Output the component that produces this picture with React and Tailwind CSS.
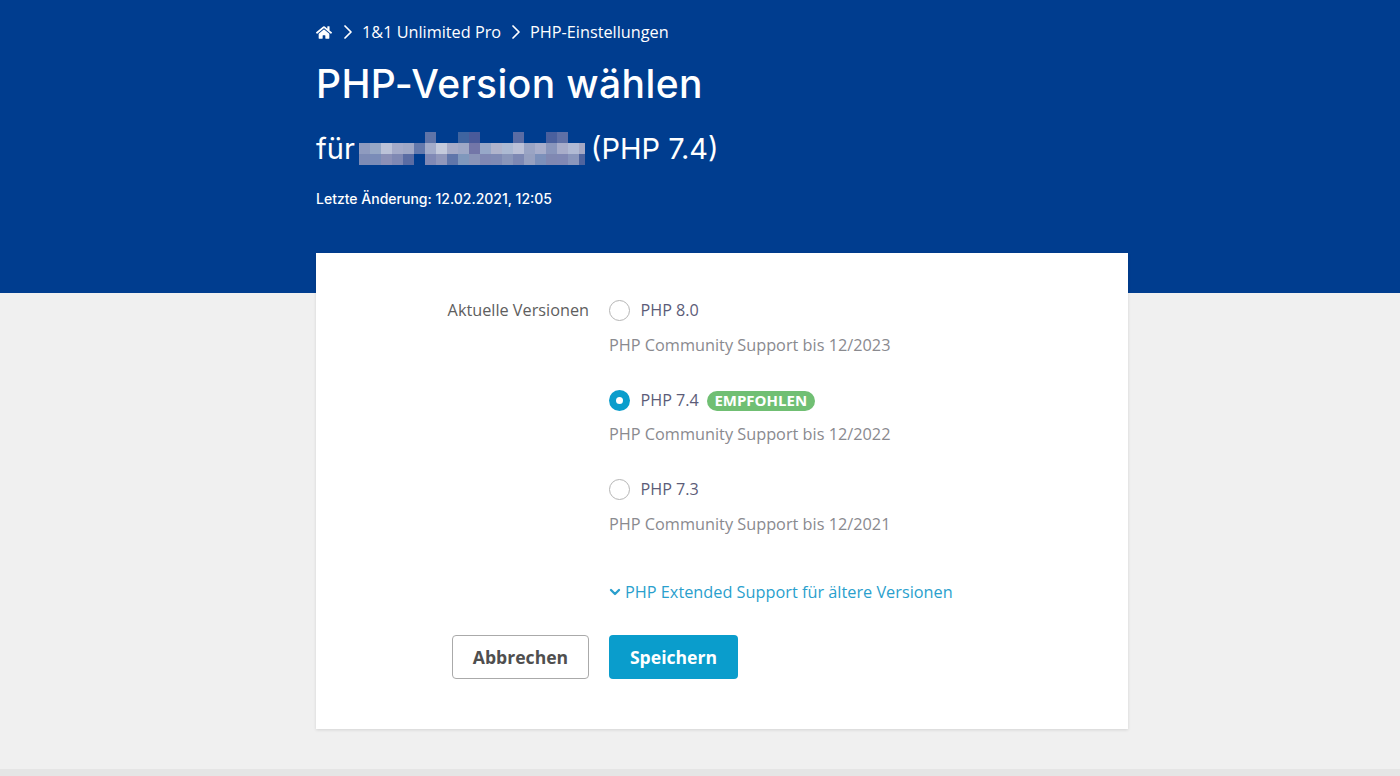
import React from 'react';
import { ChevronDown, ChevronRight } from 'lucide-react';
import { FaHome } from 'react-icons/fa';

// blurred domain name, 11px mosaic, last column is cut off
const mosaic = [
  ['', '', '', '', '', '', '#5f74a8', '', '', '#3f64a0', '#4a5a9a', '', '', '', '#5a6ca4', '', '', '#4a609e', '#5f70a6', '', ''],
  ['#8f9bbf', '#97a8c6', '#bcc2d8', '#a5abc9', '#a0a8c6', '#6479ac', '#a3acca', '#c4cadc', '#a7acc8', '#9fa8c6', '#7376a8', '#97a8c8', '#b0b4cc', '#adbad3', '#bcc1d7', '#9aa4c4', '#a8aecb', '#8a96bc', '#a8adca', '#b1bad4', '#a5a8c4'],
  ['#7d8bb5', '#7a8cb8', '#8b90b7', '#7f88b3', '#5a6ca3', '', '#8089b5', '#9097bb', '#6076aa', '#8098bc', '#8a94b8', '#8088b3', '#7f8ab4', '#8a96ba', '#7d88b3', '#96a0c0', '#7c90ba', '#8088b2', '#8088b4', '#8a96bc', '#4f649e'],
];

function Radio({ checked }) {
  if (checked) {
    return (
      <span className="w-[21px] h-[21px] rounded-full bg-[#0a9dcc] flex items-center justify-center shrink-0">
        <span className="w-[7px] h-[7px] rounded-full bg-white" />
      </span>
    );
  }
  return <span className="w-[21px] h-[21px] rounded-full border border-[#b5b5b5] bg-white shrink-0" />;
}

function VersionOption({ label, support, checked, badge, rowClass, supportClass }) {
  return (
    <div className={rowClass}>
      <div className="flex items-center h-[21px]">
        <Radio checked={checked} />
        <span className="ml-[10.5px] pb-[1px] text-[16.2px] text-[#5c5c78]">{label}</span>
        {badge && (
          <span className="ml-[8px] h-[20px] pb-[1px] px-[7.5px] rounded-full bg-[#70bf73] text-white text-[15px] font-bold flex items-center">
            {badge}
          </span>
        )}
      </div>
      <p className={`${supportClass} text-[16.3px] leading-[22px] text-[#8a8a8f]`}>{support}</p>
    </div>
  );
}

export default function App() {
  return (
    <div className="h-[776px] bg-[#f0f0f0] flex flex-col overflow-hidden font-['Open_Sans',sans-serif]">
      <div className="h-[293px] bg-[#003d8f] text-white shrink-0">
        <div className="w-[812px] ml-[316px] pt-[21px]">
          <nav className="flex items-center h-[22px] text-[16.25px]">
            <FaHome className="w-[16px] h-[17px]" />
            <ChevronRight className="w-[24px] h-[24px] ml-[4px]" strokeWidth={1.75} />
            <span className="ml-[2px]">1&amp;1 Unlimited Pro</span>
            <ChevronRight className="w-[24px] h-[24px] ml-[3px]" strokeWidth={1.75} />
            <span className="ml-[2px]">PHP-Einstellungen</span>
          </nav>
          <h1 className="mt-[15px] text-[39px] leading-[52px] font-[450] tracking-[0.4px] font-['Inter',sans-serif]">
            PHP-Version wählen
          </h1>
          <div className="mt-[22px] flex items-center h-[33px] text-[29px] font-['Inter',sans-serif]">
            <span>für</span>
            <svg width="226" height="33" viewBox="0 0 226 33" className="ml-[4px]">
              {mosaic.map((row, r) =>
                row.map((c, i) => c && <rect key={`${r}-${i}`} x={i * 11} y={r * 11} width="11" height="11" fill={c} />)
              )}
            </svg>
            <span className="ml-[6px]">(PHP 7.4)</span>
          </div>
          <p className="mt-[24px] text-[14px] leading-[20px] font-medium font-['Inter',sans-serif]">
            Letzte Änderung: 12.02.2021, 12:05
          </p>
        </div>
      </div>

      <main className="w-[812px] h-[476px] ml-[316px] -mt-[40px] shrink-0 bg-white shadow-[0_1px_3px_rgba(0,0,0,0.12)] pt-[47px] flex">
        <div className="w-[273px] text-right text-[16.25px] leading-[21px] text-[#5e5e5e]">Aktuelle Versionen</div>
        <div className="ml-[20px] flex-1">
          <VersionOption label="PHP 8.0" support="PHP Community Support bis 12/2023" rowClass="h-[90px]" supportClass="mt-[13px]" />
          <VersionOption label="PHP 7.4" support="PHP Community Support bis 12/2022" checked badge="EMPFOHLEN" rowClass="h-[89px]" supportClass="mt-[12px]" />
          <VersionOption label="PHP 7.3" support="PHP Community Support bis 12/2021" rowClass="h-[90px]" supportClass="mt-[13px]" />
          <a className="flex items-center text-[16.3px] leading-[22px] text-[#2a9fcd] mt-[12px]">
            <ChevronDown className="w-[16px] h-[16px] -ml-[2px] mr-[2px]" strokeWidth={3.5} />
            PHP Extended Support für ältere Versionen
          </a>
          <div className="flex mt-[32px] -ml-[157px] gap-[20px]">
            <button className="w-[137px] h-[44px] rounded-[4px] border border-[#aaaaaa] bg-white text-[#4f4f4f] text-[17.6px] font-bold">Abbrechen</button>
            <button className="w-[129px] h-[44px] rounded-[4px] bg-[#0a9dcc] text-white text-[17.6px] font-bold">Speichern</button>
          </div>
        </div>
      </main>

      <div className="mt-[40px] flex-1 bg-[#e5e5e5]" />
    </div>
  );
}
